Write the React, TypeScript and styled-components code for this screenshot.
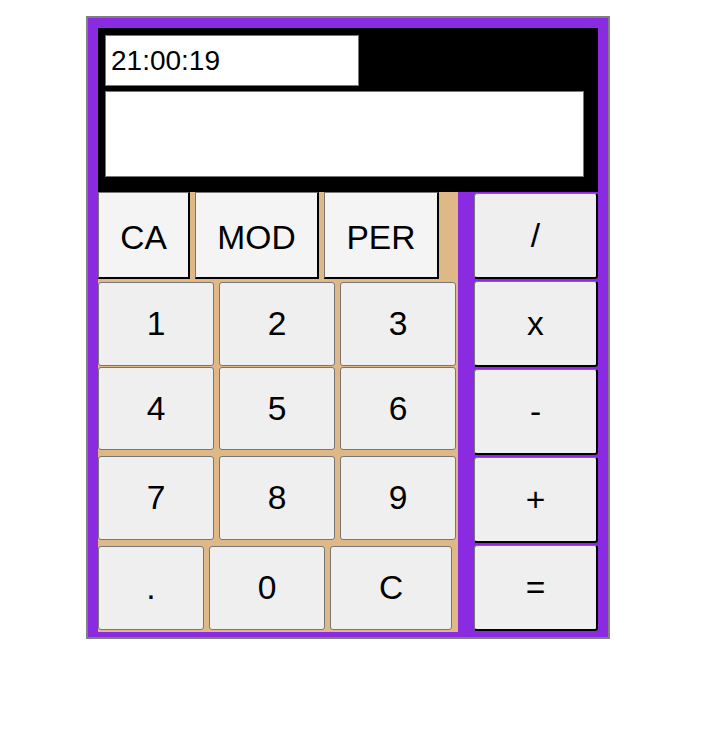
import React from "react";
import styled, { createGlobalStyle } from "styled-components";

const Global = createGlobalStyle`
  html, body { margin: 0; padding: 0; background: #ffffff; }
  body { font-family: "Liberation Sans", Arial, sans-serif; }
`;

const Calculator = styled.div`
  margin: 16px 0 0 86px;
  width: 500px;
  border: 2px solid #808080;
  background: #8a2be2;
  padding: 10px 10px 5px 10px;
`;

const Screen = styled.div`
  background: #000000;
  height: 164px;
  box-sizing: border-box;
  padding: 7px 0 0 7px;
  display: flex;
  flex-direction: column;
  align-items: flex-start;
`;

const TimeField = styled.div`
  box-sizing: border-box;
  width: 254px;
  height: 51px;
  background: #ffffff;
  border: 1px solid #767676;
  padding-left: 5px;
  display: flex;
  align-items: center;
  font-size: 28px;
  color: #000;
`;

const Display = styled.div`
  box-sizing: border-box;
  margin-top: 5px;
  width: 479px;
  height: 86px;
  background: #ffffff;
  border: 1px solid #767676;
`;

const Keypad = styled.div`
  display: flex;
  height: 440px;
`;

const Digits = styled.div`
  width: 360px;
  background: #deb887;
  display: flex;
  flex-direction: column;
`;

const Operators = styled.div`
  width: 140px;
  box-sizing: border-box;
  padding: 1px 0 0 16px;
  display: flex;
  flex-direction: column;
  gap: 2px;
`;

const Row = styled.div<{ $top: number; $h: number }>`
  display: flex;
  gap: 5px;
  margin-top: ${(p) => p.$top}px;
  height: ${(p) => p.$h}px;
`;

const BaseKey = styled.button`
  box-sizing: border-box;
  margin: 0;
  padding: 0;
  font-family: "Liberation Sans", Arial, sans-serif;
  font-size: 33.6px;
  color: #000;
  display: flex;
  align-items: center;
  justify-content: center;
  cursor: pointer;
`;

const FuncKey = styled(BaseKey)<{ $w: number }>`
  width: ${(p) => p.$w}px;
  height: 100%;
  padding-top: 5px;
  background: #f4f4f4;
  border-top: 1px solid #767676;
  border-left: 1px solid #767676;
  border-right: 2px solid #000;
  border-bottom: 2px solid #000;
  border-radius: 0;
`;

const NumKey = styled(BaseKey)<{ $w: number }>`
  width: ${(p) => p.$w}px;
  height: 100%;
  background: #efefef;
  border: 1px solid #767676;
  border-radius: 3px;
`;

const OpKey = styled(BaseKey)`
  width: 124px;
  height: 86px;
  background: #efefef;
  border-top: 1px solid #767676;
  border-left: 1px solid #767676;
  border-right: 2px solid #000;
  border-bottom: 2px solid #000;
  border-radius: 3px;
`;

const rows: { top: number; h: number; keys: [string, number][] }[] = [
  { top: 3, h: 84, keys: [["1", 116], ["2", 116], ["3", 116]] },
  { top: 1, h: 83, keys: [["4", 116], ["5", 116], ["6", 116]] },
  { top: 6, h: 84, keys: [["7", 116], ["8", 116], ["9", 116]] },
  { top: 6, h: 84, keys: [[".", 106], ["0", 116], ["C", 122]] },
];

export default function App() {
  return (
    <>
      <Global />
      <Calculator>
        <Screen>
          <TimeField>21:00:19</TimeField>
          <Display />
        </Screen>
        <Keypad>
          <Digits>
            <Row $top={0} $h={87}>
              <FuncKey $w={92}>CA</FuncKey>
              <FuncKey $w={124}>MOD</FuncKey>
              <FuncKey $w={115}>PER</FuncKey>
            </Row>
            {rows.map((r, i) => (
              <Row key={i} $top={r.top} $h={r.h}>
                {r.keys.map(([label, w]) => (
                  <NumKey key={label} $w={w}>
                    {label}
                  </NumKey>
                ))}
              </Row>
            ))}
          </Digits>
          <Operators>
            {["/", "x", "-", "+", "="].map((op) => (
              <OpKey key={op}>{op}</OpKey>
            ))}
          </Operators>
        </Keypad>
      </Calculator>
    </>
  );
}
